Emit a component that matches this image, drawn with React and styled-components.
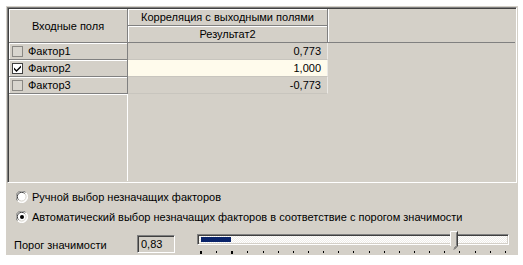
import styled, { createGlobalStyle } from "styled-components";

const GlobalStyle = createGlobalStyle`
  html, body {
    margin: 0;
    padding: 0;
    background: #ffffff;
  }
  body {
    font-family: "Liberation Sans", Arial, sans-serif;
    font-size: 11px;
    color: #000000;
  }
`;

const rows = [
  { id: 1, name: "Фактор1", value: "0,773", checked: false },
  { id: 2, name: "Фактор2", value: "1,000", checked: true },
  { id: 3, name: "Фактор3", value: "-0,773", checked: false },
];

const TICKS = 21;
const THRESHOLD = 0.83;

const App = () => {
  return (
    <>
      <GlobalStyle />
      <Panel>
        <Grid>
          <HeadCell $row="1 / span 2" $col="1">
            Входные поля
          </HeadCell>
          <HeadCell $row="1" $col="2">
            Корреляция с выходными полями
          </HeadCell>
          <HeadCell $row="2" $col="2">
            Результат2
          </HeadCell>
          <HeadBlank />
          {rows.map((el, i) => (
            <Row key={el.id} $line={i + 3} $selected={el.checked} el={el} />
          ))}
          <FillFixed />
          <FillRest />
        </Grid>

        <Options>
          <RadioRow>
            <Radio checked={false} />
            Ручной выбор незначащих факторов
          </RadioRow>
          <RadioRow>
            <Radio checked />
            Автоматический выбор незначащих факторов в соответствие с порогом
            значимости
          </RadioRow>
          <ThresholdRow>
            <ThresholdLabel>Порог значимости</ThresholdLabel>
            <ValueBox>0,83</ValueBox>
            <Slider>
              <Track>
                <Selection />
              </Track>
              <Thumb style={{ left: `${3 + THRESHOLD * 306 - 4}px` }}>
                <svg width="8" height="19" viewBox="0 0 8 19">
                  <path d="M0.5 0.5 H7.5 V15 L4 18.5 L0.5 15 Z" fill="#d4d0c8" />
                  <path d="M0.5 15 V0.5 H7" stroke="#ffffff" fill="none" />
                  <path d="M7.5 0.5 V15 L4 18.5" stroke="#404040" fill="none" />
                  <path d="M6.5 1.5 V14.6 L4 17.2" stroke="#808080" fill="none" />
                </svg>
              </Thumb>
              <Ticks>
                {Array.from({ length: TICKS }).map((_, i) => (
                  <Tick key={i} $mark={i === 0 || i === 2} />
                ))}
              </Ticks>
            </Slider>
          </ThresholdRow>
        </Options>
      </Panel>
    </>
  );
};

const Row = ({ el, $line, $selected }) => {
  return (
    <>
      <LabelCell $line={$line}>
        <Check $checked={el.checked}>
          {el.checked && (
            <svg width="9" height="9" viewBox="0 0 9 9">
              <path d="M1 3.5 L3.5 6 L8 1.5 V3.5 L3.5 8 L1 5.5 Z" fill="#000000" />
            </svg>
          )}
        </Check>
        {el.name}
      </LabelCell>
      <ValueCell $line={$line} $selected={$selected}>
        {el.value}
      </ValueCell>
    </>
  );
};

const Radio = ({ checked }) => (
  <RadioIcon width="12" height="12" viewBox="0 0 12 12">
    <circle cx="6" cy="6" r="5.5" fill="#ffffff" />
    <path d="M1.6 9.9 A5.5 5.5 0 0 1 9.9 1.6" stroke="#808080" fill="none" />
    <path d="M2.6 8.8 A4.3 4.3 0 0 1 8.8 2.6" stroke="#404040" fill="none" />
    <path d="M9.9 1.6 A5.5 5.5 0 0 1 1.6 9.9" stroke="#ffffff" fill="none" />
    <path d="M8.8 2.6 A4.3 4.3 0 0 1 2.6 8.8" stroke="#d4d0c8" fill="none" />
    {checked && <circle cx="6" cy="6" r="2" fill="#000000" />}
  </RadioIcon>
);

export default App;

// панель
const Panel = styled.div`
  margin: 6px 0 0 6px;
  width: 512px;
  height: 249px;
  padding: 1px;
  box-sizing: border-box;
  background: #d4d0c8;
`;

// таблица
const Grid = styled.div`
  width: 510px;
  height: 176px;
  box-sizing: border-box;
  border-top: 1px solid #808080;
  border-left: 1px solid #808080;
  border-right: 1px solid #ffffff;
  border-bottom: 1px solid #ffffff;
  box-shadow: inset 1px 1px #404040, inset -1px -1px #d4d0c8;
  padding: 1px;
  display: grid;
  grid-template-columns: 119px 200px 1fr;
  grid-template-rows: 17px 17px 17px 17px 17px 1fr;
  background: #d4d0c8;
`;

const HeadCell = styled.div`
  grid-row: ${(p) => p.$row};
  grid-column: ${(p) => p.$col};
  display: flex;
  align-items: center;
  justify-content: center;
  box-sizing: border-box;
  border-right: 1px solid #808080;
  border-bottom: 1px solid #808080;
  box-shadow: inset 1px 1px #ffffff;
  white-space: nowrap;
`;

const HeadBlank = styled.div`
  grid-row: 1 / span 2;
  grid-column: 3;
  border-bottom: 1px solid #808080;
  box-shadow: inset 1px 0 #ffffff;
`;

const LabelCell = styled.div`
  grid-row: ${(p) => p.$line};
  grid-column: 1;
  display: flex;
  align-items: center;
  gap: 5px;
  padding-left: 3px;
  box-sizing: border-box;
  border-right: 1px solid #808080;
  border-bottom: 1px solid #808080;
  box-shadow: inset 1px 1px #ffffff;
`;

const Check = styled.span`
  width: 11px;
  height: 11px;
  box-sizing: border-box;
  border: 1px solid ${(p) => (p.$checked ? "#404040" : "#8a8884")};
  background: ${(p) => (p.$checked ? "#ffffff" : "#d8d5ce")};
  display: flex;
  align-items: center;
  justify-content: center;
`;

const ValueCell = styled.div`
  grid-row: ${(p) => p.$line};
  grid-column: 2;
  display: flex;
  align-items: center;
  justify-content: flex-end;
  padding-right: 6px;
  box-sizing: border-box;
  border-right: 1px solid #ebe9e5;
  border-bottom: 1px solid #c8c5be;
  background: ${(p) => (p.$selected ? "#fffbec" : "#d4d0c8")};
`;

const FillFixed = styled.div`
  grid-row: 6;
  grid-column: 1;
  border-top: 1px solid #ffffff;
  border-right: 1px solid #ffffff;
`;

const FillRest = styled.div`
  grid-row: 6;
  grid-column: 2 / span 2;
`;

// переключатели
const Options = styled.div`
  display: flex;
  flex-direction: column;
  padding-top: 4px;
`;

const RadioRow = styled.label`
  display: flex;
  align-items: center;
  gap: 4px;
  height: 20px;
  padding-left: 9px;
  white-space: nowrap;
`;

const RadioIcon = styled.svg`
  flex: none;
`;

const ThresholdRow = styled.div`
  display: flex;
  align-items: flex-start;
  margin-top: 7px;
  padding-left: 7px;
`;

const ThresholdLabel = styled.span`
  width: 123px;
  line-height: 20px;
  padding-top: 1px;
`;

const ValueBox = styled.div`
  width: 38px;
  height: 18px;
  margin-top: 1px;
  box-sizing: border-box;
  border-top: 1px solid #808080;
  border-left: 1px solid #808080;
  border-right: 1px solid #ffffff;
  border-bottom: 1px solid #ffffff;
  box-shadow: inset 1px 1px #404040;
  padding: 1px 0 0 3px;
  line-height: 14px;
`;

// ползунок
const Slider = styled.div`
  position: relative;
  width: 312px;
  margin-left: 22px;
  display: flex;
  flex-direction: column;
`;

const Track = styled.div`
  height: 11px;
  box-sizing: border-box;
  border-top: 1px solid #808080;
  border-left: 1px solid #808080;
  border-right: 1px solid #ffffff;
  border-bottom: 1px solid #ffffff;
  box-shadow: inset 1px 1px #404040, inset -1px -1px #d4d0c8;
  padding: 2px 0 0 3px;
  background: repeating-conic-gradient(#ffffff 0 25%, #eeece8 0 50%) 0 0 / 2px 2px;
`;

const Selection = styled.div`
  width: 30px;
  height: 5px;
  background: #0a246a;
`;

const Thumb = styled.div`
  position: absolute;
  top: -3px;
  width: 8px;
  height: 19px;
  line-height: 0;
`;

const Ticks = styled.div`
  display: flex;
  justify-content: space-between;
  padding: 6px 3px 0 3px;
`;

const Tick = styled.span`
  width: ${(p) => (p.$mark ? "2px" : "1px")};
  height: ${(p) => (p.$mark ? "3px" : "2px")};
  background: #000000;
`;
